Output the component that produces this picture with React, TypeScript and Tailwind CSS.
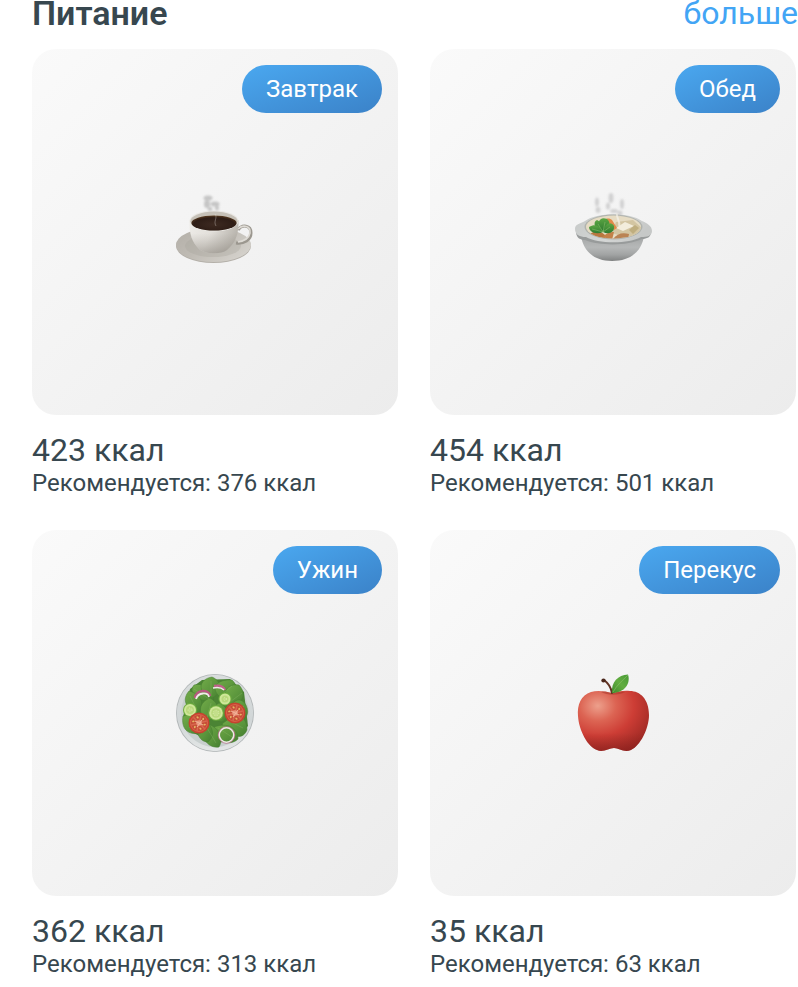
import type { ReactNode } from 'react';

interface Meal {
  id: string;
  title: string;
  calories: number;
  recommended: number;
  picture: ReactNode;
}

function CoffeeCup() {
  return (
    <svg viewBox="0 3 100 100" className="w-[100px] h-[100px]" aria-hidden="true">
      <defs>
        <linearGradient id="cup-body" x1="0" y1="0" x2="1" y2="0.3">
          <stop offset="0" stopColor="#efede9" />
          <stop offset="0.5" stopColor="#e2dfda" />
          <stop offset="1" stopColor="#b9b5ae" />
        </linearGradient>
        <linearGradient id="cup-shade" x1="0" y1="0" x2="0" y2="1">
          <stop offset="0.4" stopColor="#a09b93" stopOpacity="0" />
          <stop offset="1" stopColor="#8b867e" stopOpacity="0.55" />
        </linearGradient>
        <linearGradient id="cup-saucer" x1="0" y1="0" x2="1" y2="0.6">
          <stop offset="0" stopColor="#b3afa8" />
          <stop offset="0.5" stopColor="#bfbbb4" />
          <stop offset="1" stopColor="#d3d0ca" />
        </linearGradient>
        <radialGradient id="cup-coffee" cx="0.5" cy="0.6" r="0.6">
          <stop offset="0" stopColor="#3d2a21" />
          <stop offset="0.75" stopColor="#2e1d16" />
          <stop offset="1" stopColor="#5c3d20" />
        </radialGradient>
        <filter id="cup-steam" x="-30%" y="-30%" width="160%" height="160%">
          <feGaussianBlur stdDeviation="0.9" />
        </filter>
      </defs>
      <ellipse cx="48.5" cy="67" rx="37.5" ry="17" fill="#b3afa8" />
      <ellipse cx="48.5" cy="66" rx="37.5" ry="17" fill="url(#cup-saucer)" />
      <ellipse cx="48" cy="67" rx="28" ry="11" fill="#a9a59d" opacity="0.35" />
      <path d="M73 51 C77 45 86 46 86 54 C86 61 79 65 71 64" fill="none" stroke="#9b978f" strokeWidth="3" />
      <path d="M73 50 C78 45 86 47 85 54 C84 59 79 62 73 63" fill="none" stroke="#dedbd5" strokeWidth="1.6" />
      <path d="M24.5 41 C24 55 27 63 34 70 C39 75 56 76 62 71 C70 64 74 56 73.5 41 Z" fill="url(#cup-body)" />
      <path d="M24.5 41 C24 55 27 63 34 70 C39 75 56 76 62 71 C70 64 74 56 73.5 41 Z" fill="url(#cup-shade)" />
      <ellipse cx="49" cy="42" rx="24.5" ry="10.5" fill="#ebe9e5" />
      <ellipse cx="49" cy="42.2" rx="23.6" ry="9.6" fill="#c6c1b8" />
      <ellipse cx="49" cy="44" rx="22.6" ry="7.6" fill="url(#cup-coffee)" />
      <path d="M51 47 C48 42 53 39 50 35" fill="none" stroke="#f2f0ec" strokeWidth="0.8" opacity="0.4" />
      <g filter="url(#cup-steam)" fill="#b5b5b5" opacity="0.75">
        <ellipse cx="43" cy="19" rx="4.5" ry="2.5" />
        <ellipse cx="42" cy="25" rx="3" ry="4" />
        <ellipse cx="50" cy="25" rx="4.5" ry="2.5" />
        <ellipse cx="45" cy="30" rx="2.5" ry="2" />
        <ellipse cx="52" cy="29" rx="2" ry="2.5" />
      </g>
    </svg>
  );
}

function SoupBowl() {
  return (
    <svg viewBox="0 4 100 100" className="w-[100px] h-[100px]" aria-hidden="true">
      <defs>
        <linearGradient id="bowl-body" x1="0" y1="0" x2="0" y2="1">
          <stop offset="0" stopColor="#a3a5a5" />
          <stop offset="0.45" stopColor="#b6b8b8" />
          <stop offset="0.75" stopColor="#a1a3a3" />
          <stop offset="1" stopColor="#808282" />
        </linearGradient>
        <linearGradient id="bowl-rim" x1="0" y1="0" x2="1" y2="0.3">
          <stop offset="0" stopColor="#c6c9c8" />
          <stop offset="0.6" stopColor="#d4d6d5" />
          <stop offset="1" stopColor="#c6c8c7" />
        </linearGradient>
        <linearGradient id="bowl-leaf" x1="0" y1="0" x2="0" y2="1">
          <stop offset="0" stopColor="#5ba643" />
          <stop offset="1" stopColor="#2f7a30" />
        </linearGradient>
        <filter id="bowl-steam" x="-30%" y="-30%" width="160%" height="160%">
          <feGaussianBlur stdDeviation="0.9" />
        </filter>
        <clipPath id="bowl-inside">
          <ellipse cx="50.5" cy="49" rx="27.5" ry="11.5" />
        </clipPath>
      </defs>
      <path d="M18 58 C20 71 29 83 49 83 C70 83 79 71 81 58 Z" fill="url(#bowl-body)" />
      <path d="M13 55 C14 60 17 62 22 62 C37 68 65 68 79 61 C84 61 88 59 88 54 Z" fill="#989b9b" />
      <path d="M12 51 C12 46 17 46 22 43 C34 34 67 34 79 43 C84 45 89 48 89 53 C89 58 84 59 78 59 C66 66 35 66 23 59 C17 59 12 57 12 51 Z" fill="url(#bowl-rim)" />
      <ellipse cx="50.5" cy="49" rx="29" ry="12.5" fill="#b0b3ae" />
      <ellipse cx="50.5" cy="49" rx="27.5" ry="11.5" fill="#e6dcc4" />
      <g clipPath="url(#bowl-inside)">
        <path d="M53 44 L70 42 L81 52 L67 61 L49 55 Z" fill="#d3c5a2" />
        <path d="M53 50 L62 44 L71 48 L60 53 Z" fill="#f3eddc" />
        <path d="M66 52 L72 47 L76 50 L70 56 Z" fill="#bfae7f" />
        <path d="M27 56 Q34 50 42 57 L42 61 L32 62 Z" fill="#b9773f" />
        <path d="M38 61 Q44 53 51 54 L49 62 Z" fill="#c38148" />
        <path d="M50 61 Q56 53 66 56 L65 61 L58 63 Z" fill="#ba8354" />
      </g>
      <path d="M43 41 C45 40 48 41 49 42 L54 50 L51 52 Z" fill="#e08a4a" />
      <g fill="url(#bowl-leaf)">
        <path d="M40 54 C36 49 40 44 34 42 C29 44 32 53 40 54 Z" />
        <path d="M40 54 C33 57 26 54 26 49 C33 45 38 49 40 54 Z" />
        <path d="M39 53 C32 43 38 38 44 41 C50 46 43 52 39 53 Z" />
        <path d="M40 54 C42 45 48 43 51 48 C52 54 46 57 40 54 Z" />
      </g>
      <path d="M29 51 L40 54 L47 49 M35 46 L40 54 L42 44" fill="none" stroke="#8fc070" strokeWidth="0.5" />
      <path d="M56 48 C58 44 53 41 54 35" fill="none" stroke="#f5f2e9" strokeWidth="2" opacity="0.7" />
      <g filter="url(#bowl-steam)" fill="#bababb" opacity="0.6">
        <ellipse cx="34" cy="24" rx="2" ry="4.5" />
        <ellipse cx="35" cy="32" rx="2.5" ry="3" />
        <ellipse cx="48" cy="20" rx="2.5" ry="5" />
        <ellipse cx="45" cy="28" rx="2" ry="3.5" />
        <ellipse cx="51" cy="33" rx="4" ry="2" />
        <ellipse cx="59" cy="26" rx="2" ry="5" />
        <ellipse cx="57" cy="35" rx="2.5" ry="2.5" />
      </g>
    </svg>
  );
}

const leaves = [
  'M40 39 C29 36 24 29 29 23 C39 20 47 29 49 38 Z',
  'M47 36 C31 30 34 17 47 15 C59 20 56 33 47 36 Z',
  'M56 36 C44 26 52 17 67 18 C76 26 67 36 56 36 Z',
  'M65 43 C55 30 63 21 74 23 C83 33 77 42 65 43 Z',
  'M33 51 C20 47 17 37 24 29 C37 32 40 43 33 51 Z',
  'M61 56 C65 38 75 33 81 43 C87 56 76 62 61 56 Z',
  'M57 62 C72 49 82 54 82 68 C77 80 64 74 57 62 Z',
  'M49 65 C63 60 73 66 73 77 C64 86 51 77 49 65 Z',
  'M40 62 C54 63 59 77 54 85 C43 87 33 74 40 62 Z',
  'M33 56 C30 70 34 80 43 80 C53 71 45 59 33 56 Z',
  'M18 54 C31 51 38 59 36 71 C22 74 16 66 18 54 Z',
  'M42 59 C32 51 34 40 45 36 C58 43 54 57 42 59 Z',
  'M57 60 C47 59 45 46 54 41 C64 45 66 55 57 60 Z',
];

function Tomato({ x, y }: { x: number; y: number }) {
  return (
    <g transform={`translate(${x} ${y})`}>
      <circle r="10.5" fill="#c5432f" />
      <circle r="9" fill="#d9624a" />
      <circle r="8" fill="#c44d36" />
      {[15, 75, 135, 195, 255, 315].map((angle) => (
        <g key={angle} transform={`rotate(${angle})`}>
          <path d="M0 0 L0 -8" stroke="#d9674e" strokeWidth="1.5" />
          <ellipse cx="3" cy="-5" rx="0.9" ry="1.3" fill="#e6b465" />
        </g>
      ))}
      <circle r="2.8" fill="#e8957b" />
      <path d="M-4 -2 L4 2 M3 -3 L-2 4" stroke="#f2b49b" strokeWidth="1" />
    </g>
  );
}

function Cucumber({ x, y, r }: { x: number; y: number; r: number }) {
  return (
    <g transform={`translate(${x} ${y})`}>
      <circle r={r} fill="#6fae3f" />
      <circle r={r - 1} fill="#cfe79a" />
      <circle r={r - 3} fill="#b9d97c" />
      <circle r={r - 5} fill="#c3df8a" strokeDasharray="1 1.5" stroke="#dcecae" strokeWidth="1" />
    </g>
  );
}

function Salad() {
  return (
    <svg viewBox="0 1 100 100" className="w-[100px] h-[100px]" aria-hidden="true">
      <defs>
        <linearGradient id="salad-plate" x1="0" y1="0" x2="0" y2="1">
          <stop offset="0" stopColor="#d9dddd" />
          <stop offset="0.6" stopColor="#d1d6d7" />
          <stop offset="1" stopColor="#e3e6e6" />
        </linearGradient>
        <linearGradient id="salad-leaf" x1="0" y1="0" x2="1" y2="1">
          <stop offset="0" stopColor="#72ab49" />
          <stop offset="0.6" stopColor="#5a953c" />
          <stop offset="1" stopColor="#457f30" />
        </linearGradient>
      </defs>
      <circle cx="50" cy="51" r="39" fill="#b0b5b6" />
      <circle cx="50" cy="51" r="38.2" fill="url(#salad-plate)" />
      <circle cx="50" cy="51" r="34" fill="#c8cfce" />
      <path d="M25 27 L37 18 L65 17 L79 30 L83 64 L70 77 L49 82 L27 70 L18 55 Z" fill="#4b8434" />
      {leaves.map((d) => (
        <path key={d} d={d} fill="url(#salad-leaf)" stroke="#457c30" strokeWidth="0.5" />
      ))}
      <g fill="none" stroke="#93be70" strokeWidth="0.6" opacity="0.5">
        <path d="M29 27 L44 37 M46 19 L46 34 M67 24 L54 35 M77 31 L65 40 M25 34 L32 48" />
        <path d="M79 44 L66 55 M78 66 L64 59 M67 75 L53 66 M51 81 L42 66 M24 66 L32 59 M46 41 L42 56 M55 46 L56 57" />
      </g>
      <path d="M30 36 C31 27 44 27 45 34" fill="none" stroke="#b8577f" strokeWidth="2.6" />
      <path d="M31 37 C33 30 43 30 44 35" fill="none" stroke="#f0ebe9" strokeWidth="1.8" />
      <path d="M49 24 C54 23 58 24 60 28" fill="none" stroke="#c0608a" strokeWidth="2.4" />
      <path d="M48 26 C53 25 57 26 59 28" fill="none" stroke="#f1ebe9" strokeWidth="1.4" />
      <Cucumber x={60} y={37} r={6.5} />
      <Cucumber x={25} y={48} r={7} />
      <Cucumber x={51} y={51} r={7.8} />
      <Tomato x={34} y={61} />
      <Tomato x={70} y={51} />
      <circle cx="61.5" cy="73" r="8.2" fill="none" stroke="#b9708c" strokeWidth="1" />
      <circle cx="61.5" cy="73" r="7.2" fill="none" stroke="#eeeae5" strokeWidth="1.5" />
    </svg>
  );
}

function Apple() {
  return (
    <svg viewBox="0 1 100 100" className="w-[100px] h-[100px]" aria-hidden="true">
      <defs>
        <radialGradient id="apple-body" cx="0.28" cy="0.25" r="0.85">
          <stop offset="0" stopColor="#eda08c" />
          <stop offset="0.3" stopColor="#dc6453" />
          <stop offset="0.6" stopColor="#cd3d35" />
          <stop offset="1" stopColor="#9c2823" />
        </radialGradient>
        <linearGradient id="apple-edge" x1="0" y1="0" x2="0" y2="1">
          <stop offset="0.7" stopColor="#8f2520" stopOpacity="0" />
          <stop offset="1" stopColor="#841d1b" stopOpacity="0.5" />
        </linearGradient>
        <linearGradient id="apple-leaf" x1="0" y1="1" x2="1" y2="0">
          <stop offset="0" stopColor="#3f8a2d" />
          <stop offset="0.5" stopColor="#62ad40" />
          <stop offset="1" stopColor="#489a36" />
        </linearGradient>
      </defs>
      <path d="M49 31 C42 29 34 28 28 30 C18 33 14 43 15 54 C16 69 25 85 34 88 C40 91 46 86 51 86 C56 86 61 91 68 88 C77 84 86 67 86 53 C86 37 77 29 67 29 C60 28 54 30 49 31 Z" fill="url(#apple-body)" />
      <path d="M49 31 C42 29 34 28 28 30 C18 33 14 43 15 54 C16 69 25 85 34 88 C40 91 46 86 51 86 C56 86 61 91 68 88 C77 84 86 67 86 53 C86 37 77 29 67 29 C60 28 54 30 49 31 Z" fill="url(#apple-edge)" />
      <path d="M38 30 C43 33 55 34 62 30 C55 29 53 31 49 31 C44 30 41 29 38 30 Z" fill="#95291f" opacity="0.4" />
      <path d="M41 18 C45 21 48 25 49 31" fill="none" stroke="#623323" strokeWidth="2" strokeLinecap="round" />
      <ellipse cx="40.5" cy="18.5" rx="2.2" ry="2" fill="#4a271b" />
      <path d="M49 31 C48 20 55 13 65 12.5 C68 22 61 31 49 31 Z" fill="url(#apple-leaf)" />
      <path d="M50 30 C54 23 59 19 65 13" fill="none" stroke="#8cc268" strokeWidth="0.6" />
    </svg>
  );
}

const meals: Meal[] = [
  { id: 'breakfast', title: 'Завтрак', calories: 423, recommended: 376, picture: <CoffeeCup /> },
  { id: 'lunch', title: 'Обед', calories: 454, recommended: 501, picture: <SoupBowl /> },
  { id: 'dinner', title: 'Ужин', calories: 362, recommended: 313, picture: <Salad /> },
  { id: 'snack', title: 'Перекус', calories: 35, recommended: 63, picture: <Apple /> },
];

function MealCard({ meal }: { meal: Meal }) {
  return (
    <article>
      <div className="relative flex aspect-square items-center justify-center rounded-3xl bg-linear-to-br from-[#fafafa] to-[#ececec]">
        {meal.picture}
        <h2 className="absolute top-4 right-4 flex h-12 items-center rounded-full bg-linear-to-br from-[#4aa8f0] to-[#3b82c8] px-6 text-2xl text-white">
          {meal.title}
        </h2>
      </div>
      <p className="mt-4 text-[32px] leading-[39px]">{meal.calories} ккал</p>
      <p className="text-2xl leading-[26px]">Рекомендуется: {meal.recommended} ккал</p>
    </article>
  );
}

export default function App() {
  return (
    <main className="bg-white pb-2 pl-8 font-['Roboto',sans-serif] text-[#37474f]">
      <header className="flex h-[49px] items-start justify-between">
        <h1 className="text-[34px] leading-[26px] font-semibold">Питание</h1>
        <a href="#meals" className="text-[32px] leading-[26px] text-[#42a5f5]">
          больше
        </a>
      </header>
      <section id="meals" className="grid grid-cols-2 gap-x-8 gap-y-[34px] pr-0.5">
        {meals.map((meal) => (
          <MealCard key={meal.id} meal={meal} />
        ))}
      </section>
    </main>
  );
}
